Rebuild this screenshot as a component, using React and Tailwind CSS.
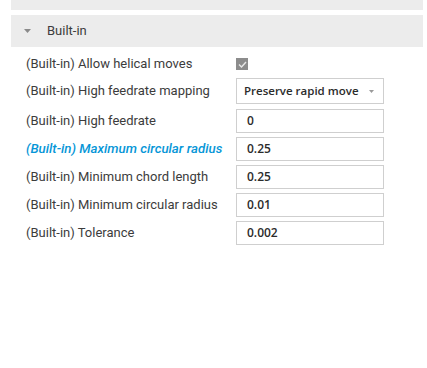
export default function App() {
  const rows = [
    { label: "(Built-in) High feedrate", value: "0", mt: "mt-[5px]" },
    { label: "(Built-in) Maximum circular radius", value: "0.25", active: true, mt: "mt-1" },
    { label: "(Built-in) Minimum chord length", value: "0.25", mt: "mt-1" },
    { label: "(Built-in) Minimum circular radius", value: "0.01", mt: "mt-1" },
    { label: "(Built-in) Tolerance", value: "0.002", mt: "mt-1" },
  ];
  const labelCls = "w-[210px] text-[13px] text-[#3c3c3c]";
  const inputCls =
    "w-[148px] h-6 border border-[#cfcfcf] bg-white pl-[10px] flex items-center text-[12px] font-semibold text-[#2b2b2b]";
  return (
    <div className="w-[427px] h-[368px] bg-white pl-[11px] pr-[4px]" style={{ fontFamily: "Roboto, 'Noto Sans', sans-serif" }}>
      <div className="h-[10px] bg-[#ececec]" />
      <div className="mt-[5px] h-[32px] bg-[#ececec] flex items-center">
        <svg width="7" height="4" viewBox="0 0 7 4" className="ml-[13px]">
          <path d="M0 0 H7 L3.5 4 Z" fill="#8a8a8a" />
        </svg>
        <span className="ml-[16px] text-[13px] text-[#3c3c3c]">Built-in</span>
      </div>
      <div className="pt-[5px] pl-[15px]">
        <div className="h-6 flex items-center">
          <div className={labelCls}>(Built-in) Allow helical moves</div>
          <div className="w-3 h-3 bg-[#8c8c8c] flex items-center justify-center">
            <svg width="9" height="7" viewBox="0 0 9 7">
              <path d="M1 3.5 L3.5 6 L8 1" stroke="#e8e8e8" strokeWidth="1.4" fill="none" />
            </svg>
          </div>
        </div>
        <div className="mt-[2px] h-[26px] flex items-center">
          <div className={labelCls}>(Built-in) High feedrate mapping</div>
          <div
            className="w-[148px] h-[26px] border border-[#cfcfcf] bg-white pl-[7px] pr-[9px] flex items-center justify-between text-[11.5px] font-semibold text-[#2b2b2b]"
            style={{ fontFamily: "'Open Sans', sans-serif" }}
          >
            <span>Preserve rapid move</span>
            <svg width="5" height="3" viewBox="0 0 5 3">
              <path d="M0 0 H5 L2.5 3 Z" fill="#9a9a9a" />
            </svg>
          </div>
        </div>
        {rows.map((r) => (
          <div key={r.label} className={`${r.mt} h-6 flex items-center`}>
            <div
              className={
                r.active
                  ? "w-[210px] text-[13.3px] italic font-medium text-[#0696d7]"
                  : labelCls
              }
            >
              {r.label}
            </div>
            <div className={inputCls} style={{ fontFamily: "'Open Sans', sans-serif" }}>
              {r.value}
            </div>
          </div>
        ))}
      </div>
    </div>
  );
}
